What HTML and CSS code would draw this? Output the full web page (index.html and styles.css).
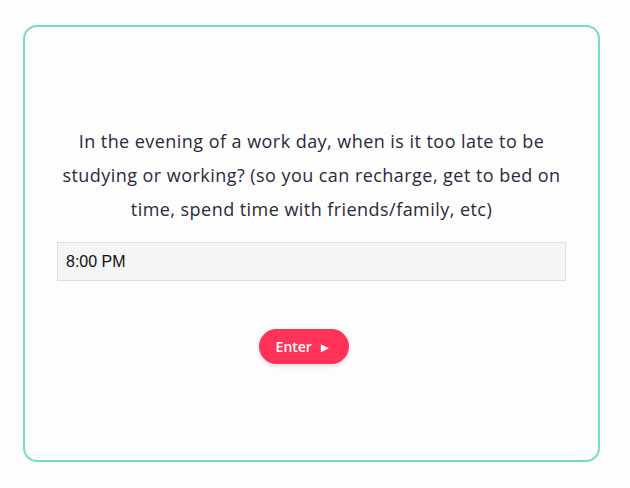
FILE: index.html
```html
<!DOCTYPE html>
<html>
<head>
<meta charset="utf-8">
<link rel="stylesheet" href="styles.css">
</head>
<body>
<div class="card">
  <p class="question">In the evening of a work day, when is it too late to be studying or working? (so you can recharge, get to bed on time, spend time with friends/family, etc)</p>
  <div class="field">8:00 PM</div>
  <div class="actions">
    <button class="enter">Enter <span class="arrow">►</span></button>
  </div>
</div>
</body>
</html>
```
FILE: styles.css
```css
html, body {
  margin: 0;
  background: #fdfdfd;
}
body {
  padding: 25px 0 0 23px;
}
.card {
  box-sizing: border-box;
  width: 577px;
  height: 437px;
  border: 2px solid #76dfb6;
  border-radius: 14px;
  padding: 97px 32px 0 32px;
  font-family: "Open Sans", "Noto Sans", sans-serif;
}
.question {
  margin: 0;
  text-align: center;
  font-size: 18px;
  line-height: 34px;
  letter-spacing: 0.45px;
  color: #2a2a3c;
}
.field {
  box-sizing: border-box;
  margin-top: 16px;
  height: 39px;
  background: #f5f5f5;
  border: 1px solid #dedede;
  padding: 0 8px;
  display: flex;
  align-items: center;
  font-family: "Liberation Sans", Arial, sans-serif;
  font-size: 16px;
  color: #111;
}
.actions {
  display: flex;
  justify-content: center;
  margin-top: 48px;
}
.enter {
  width: 90px;
  height: 35px;
  border: none;
  border-radius: 18px;
  background: #ff3359;
  color: #fff;
  font-family: "Open Sans", "Noto Sans", sans-serif;
  font-weight: 600;
  font-size: 14px;
  box-shadow: 0 2px 4px rgba(0,0,0,0.15);
  padding: 0;
  margin-right: 16px;
}
.arrow {
  font-size: 13px;
  margin-left: 3px;
}
```
